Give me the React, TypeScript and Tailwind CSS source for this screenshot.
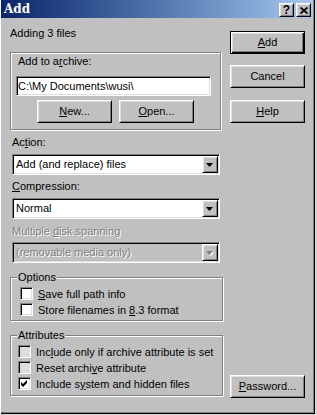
import React from "react";

const raised =
  "border border-t-white border-l-white border-r-black border-b-black shadow-[inset_1px_1px_0_#dfdfdf,inset_-1px_-1px_0_#808080]";
const sunken =
  "border border-t-[#808080] border-l-[#808080] border-r-white border-b-white shadow-[inset_1px_1px_0_#000,inset_-1px_-1px_0_#dfdfdf]";
const etched = "border border-[#808080] shadow-[inset_1px_1px_0_#fff,1px_1px_0_#fff]";
const disabledText = "text-[#808080] [text-shadow:1px_1px_0_#fff]";

function Btn({ children, def }: { children: React.ReactNode; def?: boolean }) {
  const cls = def
    ? "border border-black shadow-[inset_1px_1px_0_#fff,inset_-1px_-1px_0_#000,inset_-2px_-2px_0_#808080,inset_2px_2px_0_#dfdfdf]"
    : raised;
  return (
    <div className={`${cls} w-[75px] h-[23px] bg-[#c0c0c0] flex items-center justify-center shrink-0`}>
      <span>{children}</span>
    </div>
  );
}

function Select({ text, disabled }: { text: string; disabled?: boolean }) {
  return (
    <div
      className={`${sunken} ml-[2px] w-[208px] h-[21px] flex items-center ${disabled ? "bg-[#c0c0c0]" : "bg-white"}`}
    >
      <span className={`flex-1 pl-[3px] whitespace-nowrap ${disabled ? disabledText : ""}`}>{text}</span>
      <div className={`${raised} w-[16px] h-[17px] mr-[1px] bg-[#c0c0c0] flex items-center justify-center`}>
        <svg width="8" height="5" viewBox="0 0 8 5" className="mt-[1px]">
          {disabled && <path d="M1 1h7L4.5 5z" fill="#fff" />}
          <path d="M0 0h7L3.5 4z" fill={disabled ? "#808080" : "#000"} />
        </svg>
      </div>
    </div>
  );
}

function Check({
  children,
  checked,
  grey,
  pl,
}: {
  children: React.ReactNode;
  checked?: boolean;
  grey?: boolean;
  pl: string;
}) {
  return (
    <div className={`h-[16px] flex items-start ${pl}`}>
      <div
        className={`${sunken} w-[13px] h-[13px] shrink-0 flex items-center justify-center ${grey ? "bg-[#dcdcdc]" : "bg-white"}`}
      >
        {checked && (
          <svg width="9" height="9" viewBox="0 0 9 9">
            <polygon points="1,3 3,5 7,1 7,4 3,8 1,6" fill="#000" />
          </svg>
        )}
      </div>
      <span className="ml-[5px] whitespace-nowrap mt-[1px]">{children}</span>
    </div>
  );
}

export default function App() {
  return (
    <div className="w-[317px] h-[415px] bg-[#d4d4d4] font-['Liberation_Sans',Arial,sans-serif] text-[11px] leading-[13px] text-black">
      <div className="w-[315px] h-[414px] bg-[#c0c0c0] flex flex-col shadow-[inset_1px_0_0_#fff,inset_-1px_-1px_0_#000,inset_-2px_-2px_0_#808080]">
        {/* Title bar */}
        <div className="h-[18px] w-[312px] ml-[1px] bg-linear-to-r from-[#0a246a] to-[#a6caf0] flex items-start pl-[3px] pr-[2px]">
          <span className="font-['DejaVu_Serif',serif] font-bold text-[12px] leading-[18px] text-white">
            Add
          </span>
          <div className="ml-auto mt-[3px] flex gap-[2px]">
            <div className={`${raised} w-[15px] h-[14px] bg-[#c0c0c0] flex items-center justify-center`}>
              <span className="font-bold text-[12px] leading-[11px] font-['Liberation_Sans',sans-serif]">?</span>
            </div>
            <div className={`${raised} w-[15px] h-[14px] bg-[#c0c0c0] flex items-center justify-center`}>
              <svg width="8" height="7" viewBox="0 0 8 7">
                <path d="M0.5 0.5L7.5 6.5M7.5 0.5L0.5 6.5" stroke="#000" strokeWidth="1.8" />
              </svg>
            </div>
          </div>
        </div>

        {/* Body */}
        <div className="flex pl-[10px] flex-1">
          {/* Left column */}
          <div className="w-[213px] flex flex-col">
            <div className="mt-[9px] whitespace-nowrap">Adding 3 files</div>

            <div className={`${etched} mt-[12px] w-[211px] h-[78px] flex flex-col`}>
              <div className="pt-[2px] pl-[7px]">
                Add to a<u>r</u>chive:
              </div>
              <div className={`${sunken} mt-[8px] ml-[5px] w-[195px] h-[20px] bg-white flex items-center`}>
                <span className="pl-[1px] whitespace-nowrap">C:\My Documents\wusi\</span>
              </div>
              <div className="mt-[4px] ml-[26px] flex gap-[7px]">
                <Btn>
                  <u>N</u>ew...
                </Btn>
                <Btn>
                  <u>O</u>pen...
                </Btn>
              </div>
            </div>

            <div className="mt-[6px] pl-[2px]">
              Ac<u>t</u>ion:
            </div>
            <div className="mt-[5px]">
              <Select text="Add (and replace) files" />
            </div>

            <div className="mt-[5px] pl-[2px]">
              <u>C</u>ompression:
            </div>
            <div className="mt-[5px]">
              <Select text="Normal" />
            </div>

            <div className={`mt-[6px] pl-[2px] ${disabledText}`}>
              Multiple <u>d</u>isk spanning
            </div>
            <div className="mt-[4px]">
              <Select text="(removable media only)" disabled />
            </div>

            <div className={`${etched} relative mt-[14px] w-[213px] h-[44px] pt-[9px]`}>
              <span className="absolute -top-[7px] left-[6px] px-[1px] bg-[#c0c0c0]">Options</span>
              <Check pl="pl-[9px]">
                <u>S</u>ave full path info
              </Check>
              <Check pl="pl-[9px]">
                Store filenames in <u>8</u>.3 format
              </Check>
            </div>

            <div className={`${etched} relative mt-[14px] w-[213px] h-[61px] pt-[9px]`}>
              <span className="absolute -top-[7px] left-[6px] px-[1px] bg-[#c0c0c0]">Attributes</span>
              <Check pl="pl-[7px]" grey>
                Inc<u>l</u>ude only if archive attribute is set
              </Check>
              <Check pl="pl-[7px]" grey>
                Reset archi<u>v</u>e attribute
              </Check>
              <Check pl="pl-[7px]" checked>
                Include s<u>y</u>stem and hidden files
              </Check>
            </div>
          </div>

          {/* Right column */}
          <div className="ml-[7px] flex flex-col">
            <div className="mt-[13px]">
              <Btn def>
                <u>A</u>dd
              </Btn>
            </div>
            <div className="mt-[11px]">
              <Btn>Cancel</Btn>
            </div>
            <div className="mt-[12px]">
              <Btn>
                <u>H</u>elp
              </Btn>
            </div>
            <div className="mt-auto mb-[16px]">
              <Btn>
                <u>P</u>assword...
              </Btn>
            </div>
          </div>
        </div>
      </div>
    </div>
  );
}
